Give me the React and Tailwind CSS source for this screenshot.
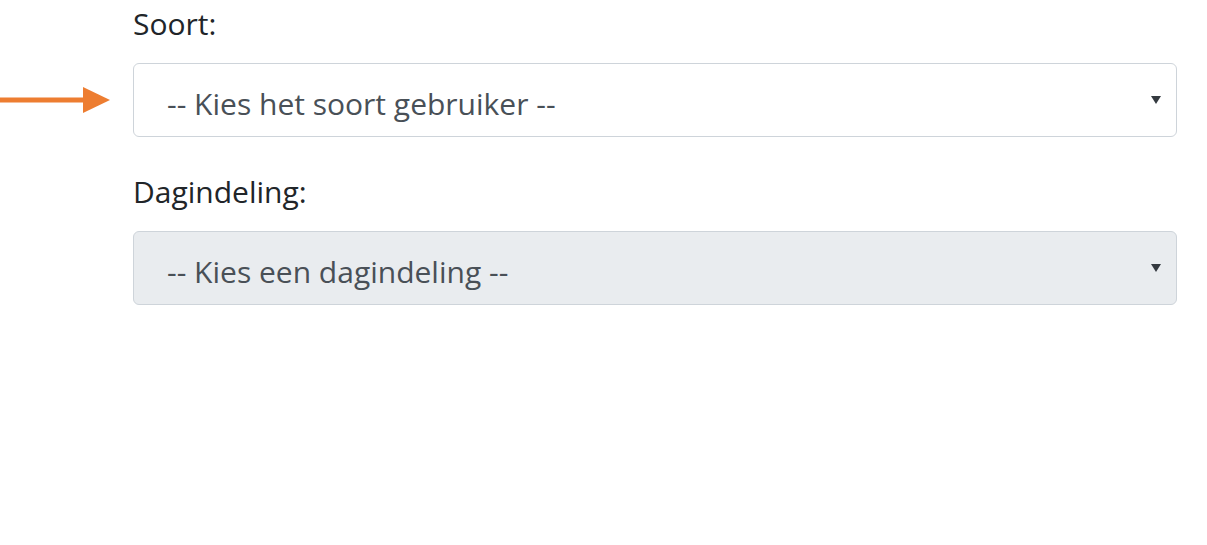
import React from "react";

function Caret() {
  return (
    <svg width="10" height="8" viewBox="0 0 10 8" className="shrink-0 -mt-[6px]">
      <path d="M0 0 H10 L5 8 Z" fill="#343a40" />
    </svg>
  );
}

function SelectBox({ text, disabled }) {
  return (
    <div
      className={`flex-1 h-[74px] flex items-center justify-between rounded-[6px] border border-[#ced4da] pl-[33px] pr-[15px] pt-[6px] ${
        disabled ? "bg-[#e9ecef]" : "bg-white"
      }`}
    >
      <span className="text-[30px] text-[#495057]">{text}</span>
      <Caret />
    </div>
  );
}

export default function App() {
  return (
    <div
      className="w-[1207px] h-[545px] bg-white text-[#212529] overflow-hidden"
      style={{ fontFamily: '"Open Sans", "Noto Sans", sans-serif' }}
    >
      <div className="pt-[4px] pr-[30px]">
        <div className="pl-[133px] text-[30px] leading-[40px]">Soort:</div>
        <div className="flex items-center mt-[19px]">
          <div className="w-[133px] shrink-0 flex items-center">
            <svg width="110" height="28" viewBox="0 0 110 28">
              <rect x="0" y="11.5" width="85" height="5" fill="#ed7d31" />
              <path d="M83 1 L110 14 L83 27 Z" fill="#ed7d31" />
            </svg>
          </div>
          <SelectBox text="-- Kies het soort gebruiker --" />
        </div>
        <div className="pl-[133px] text-[30px] leading-[40px] mt-[35px]">Dagindeling:</div>
        <div className="flex items-center mt-[19px]">
          <div className="w-[133px] shrink-0" />
          <SelectBox text="-- Kies een dagindeling --" disabled />
        </div>
      </div>
    </div>
  );
}
